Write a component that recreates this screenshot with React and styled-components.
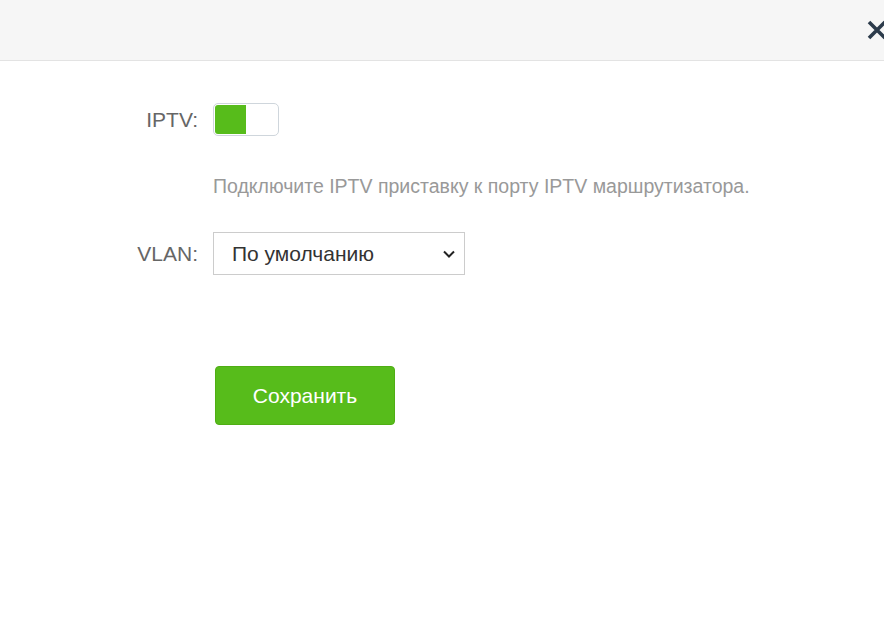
import React, { useState } from 'react';
import styled, { createGlobalStyle } from 'styled-components';

const Global = createGlobalStyle`
  html, body {
    margin: 0;
    padding: 0;
    background: #fff;
    font-family: "Liberation Sans", Arial, sans-serif;
  }
`;

const Page = styled.div`
  width: 884px;
  height: 634px;
  overflow: hidden;
  background: #fff;
`;

const Header = styled.header`
  height: 60px;
  background: #f6f6f6;
  border-bottom: 1px solid #e3e3e3;
  display: flex;
  justify-content: flex-end;
  align-items: center;
  overflow: hidden;
`;

const Close = styled.button`
  border: 0;
  background: none;
  padding: 0;
  margin-right: -6px;
  width: 26px;
  height: 26px;
  display: flex;
  align-items: center;
  justify-content: center;
  cursor: pointer;
`;

const Form = styled.div`
  display: grid;
  grid-template-columns: 198px 1fr;
  column-gap: 15px;
  padding-top: 42px;
`;

const Label = styled.div`
  text-align: right;
  color: #666;
  font-size: 21px;
  line-height: ${p => p.h}px;
`;

const Field = styled.div`
  display: flex;
  align-items: center;
  min-height: ${p => p.h}px;
  margin-bottom: ${p => p.mb || 0}px;
`;

const Toggle = styled.button`
  width: 66px;
  height: 33px;
  padding: 1px;
  border: 1px solid #cfd6dc;
  border-radius: 5px;
  background: #fff;
  display: flex;
  cursor: pointer;
  box-sizing: border-box;
`;

const Knob = styled.span`
  width: 31px;
  height: 100%;
  border-radius: 3px 0 0 3px;
  background: ${p => (p.on ? '#57bc1b' : '#fff')};
`;

const Hint = styled.div`
  color: #999;
  font-size: 19.5px;
  line-height: 24px;
`;

const SelectBox = styled.div`
  position: relative;
  width: 252px;
  height: 43px;
  box-sizing: border-box;
  border: 1px solid #cccccc;
  display: flex;
  align-items: center;
  padding-left: 18px;
  color: #333;
  font-size: 21px;
`;

const Chevron = styled.svg`
  position: absolute;
  right: 8px;
  top: 50%;
  transform: translateY(-50%);
`;

const SaveButton = styled.button`
  margin-left: 2px;
  width: 180px;
  height: 59px;
  border: 1px solid #4fae14;
  border-radius: 4px;
  background: #57bc1b;
  color: #fff;
  font-family: inherit;
  font-size: 21px;
  cursor: pointer;
`;

export default function App() {
  const [on, setOn] = useState(true);
  return (
    <Page>
      <Global />
      <Header>
        <Close aria-label="close">
          <svg width="22" height="22" viewBox="0 0 22 22">
            <path d="M3 3 L19 19 M19 3 L3 19" stroke="#2c3b4b" strokeWidth="3.6" strokeLinecap="butt" />
          </svg>
        </Close>
      </Header>
      <Form>
        <Label h={33}>IPTV:</Label>
        <Field h={33} mb={38}>
          <Toggle onClick={() => setOn(!on)}>
            <Knob on={on ? 1 : 0} />
          </Toggle>
        </Field>

        <div />
        <Field h={24} mb={34}>
          <Hint>Подключите IPTV приставку к порту IPTV маршрутизатора.</Hint>
        </Field>

        <Label h={43}>VLAN:</Label>
        <Field h={43} mb={91}>
          <SelectBox>
            По умолчанию
            <Chevron width="14" height="10" viewBox="0 0 14 10">
              <path d="M2 2.5 L7 7.5 L12 2.5" fill="none" stroke="#222" strokeWidth="2" />
            </Chevron>
          </SelectBox>
        </Field>

        <div />
        <Field h={59}>
          <SaveButton>Сохранить</SaveButton>
        </Field>
      </Form>
    </Page>
  );
}
